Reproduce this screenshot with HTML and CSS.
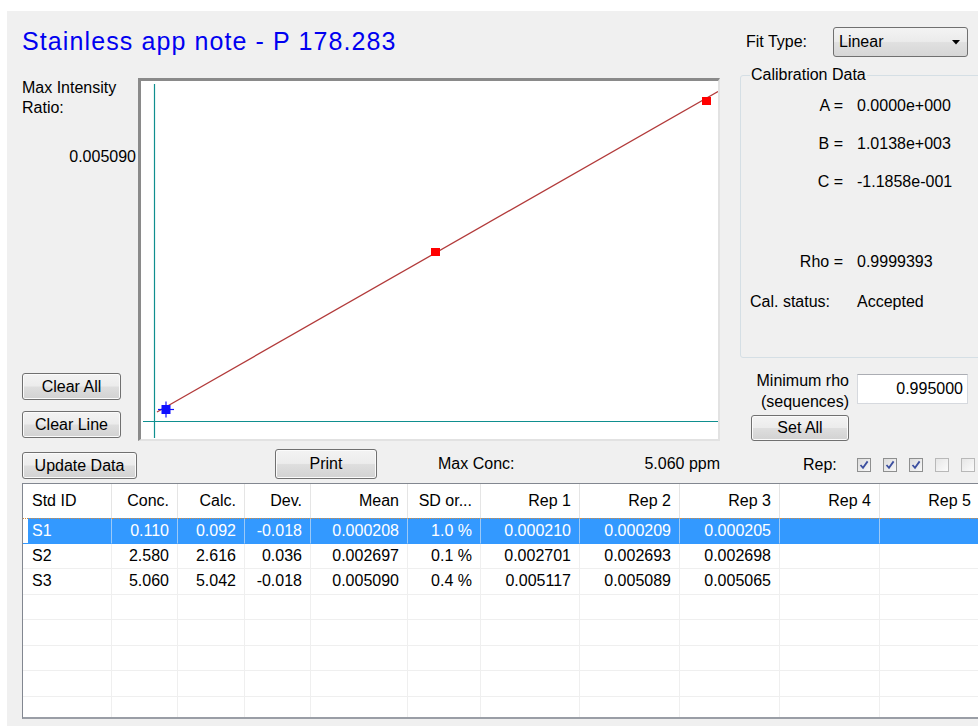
FILE: index.html
```html
<!DOCTYPE html>
<html lang="en">
<head>
<meta charset="utf-8">
<title>Calibration</title>
<link rel="stylesheet" href="styles.css">
</head>
<body>
<div class="window">
  <h1 class="title">Stainless app note - P 178.283</h1>

  <div class="axis-col">
    <div class="ylabel">Max Intensity<br>Ratio:</div>
    <div class="yvalue">0.005090</div>
    <div class="left-buttons">
      <button class="btn btn-clear">Clear All</button>
      <button class="btn btn-clear">Clear Line</button>
    </div>
  </div>

  <div class="chart">
    <svg class="plot" width="577" height="358" viewBox="0 0 577 358">
      <line x1="13.5" y1="3" x2="13.5" y2="357" stroke="#0f8f8f" stroke-width="1.2"/>
      <line x1="2" y1="340.5" x2="577" y2="340.5" stroke="#0f8f8f" stroke-width="1.2"/>
      <line x1="16" y1="331" x2="577" y2="10.5" stroke="#b23a3a" stroke-width="1.3"/>
      <g fill="#1010ff" stroke="#1010ff">
        <rect x="20.5" y="324" width="9" height="9" stroke="none"/>
        <line x1="17" y1="328.5" x2="33" y2="328.5" stroke-width="1.2"/>
        <line x1="25" y1="320.5" x2="25" y2="336.5" stroke-width="1.2"/>
      </g>
      <rect x="290" y="167" width="9" height="8" fill="#ff0000"/>
      <rect x="561" y="16" width="9" height="8" fill="#ff0000"/>
    </svg>
  </div>

  <div class="side">
    <div class="fit">
      <span>Fit Type:</span>
      <div class="combo">
        <span>Linear</span>
        <svg width="8" height="5" viewBox="0 0 8 5"><path d="M0 0 H8 L4 4.5 Z" fill="#000"/></svg>
      </div>
    </div>

    <fieldset class="group">
      <legend>Calibration Data</legend>
      <div class="cal-row first"><span class="k">A =</span><span class="v">0.0000e+000</span></div>
      <div class="cal-row"><span class="k">B =</span><span class="v">1.0138e+003</span></div>
      <div class="cal-row"><span class="k">C =</span><span class="v">-1.1858e-001</span></div>
      <div class="cal-row rho"><span class="k">Rho =</span><span class="v">0.9999393</span></div>
      <div class="cal-row status"><span class="k">Cal. status:</span><span class="v">Accepted</span></div>
    </fieldset>

    <div class="rho-row">
      <div class="rho-label">Minimum rho<br>(sequences)</div>
      <div class="field">0.995000</div>
    </div>
    <button class="btn btn-set">Set All</button>

    <div class="rep-row">
      <span class="rep-label">Rep:</span>
      <span class="check on"><svg width="10" height="10" viewBox="0 0 10 10"><path d="M1.5 5 L4 7.8 L8.6 1.4" fill="none" stroke="#3d50a0" stroke-width="1.8"/></svg></span>
      <span class="check on"><svg width="10" height="10" viewBox="0 0 10 10"><path d="M1.5 5 L4 7.8 L8.6 1.4" fill="none" stroke="#3d50a0" stroke-width="1.8"/></svg></span>
      <span class="check on"><svg width="10" height="10" viewBox="0 0 10 10"><path d="M1.5 5 L4 7.8 L8.6 1.4" fill="none" stroke="#3d50a0" stroke-width="1.8"/></svg></span>
      <span class="check"></span>
      <span class="check"></span>
    </div>
  </div>

  <div class="bar">
    <button class="btn btn-update">Update Data</button>
    <button class="btn btn-print">Print</button>
    <span class="max-label">Max Conc:</span>
    <span class="max-value">5.060 ppm</span>
  </div>

  <div class="grid-wrap">
    <table class="data">
      <colgroup>
        <col style="width:89px"><col style="width:66px"><col style="width:67px"><col style="width:66px">
        <col style="width:97px"><col style="width:73px"><col style="width:99px"><col style="width:100px">
        <col style="width:100px"><col style="width:100px"><col style="width:100px">
      </colgroup>
      <thead>
        <tr>
          <th class="id">Std ID</th><th>Conc.</th><th>Calc.</th><th>Dev.</th><th>Mean</th><th>SD or...</th>
          <th>Rep 1</th><th>Rep 2</th><th>Rep 3</th><th>Rep 4</th><th>Rep 5</th>
        </tr>
      </thead>
      <tbody>
        <tr class="sel">
          <td class="id">S1</td><td>0.110</td><td>0.092</td><td>-0.018</td><td>0.000208</td><td>1.0 %</td>
          <td>0.000210</td><td>0.000209</td><td>0.000205</td><td></td><td></td>
        </tr>
        <tr>
          <td class="id">S2</td><td>2.580</td><td>2.616</td><td>0.036</td><td>0.002697</td><td>0.1 %</td>
          <td>0.002701</td><td>0.002693</td><td>0.002698</td><td></td><td></td>
        </tr>
        <tr>
          <td class="id">S3</td><td>5.060</td><td>5.042</td><td>-0.018</td><td>0.005090</td><td>0.4 %</td>
          <td>0.005117</td><td>0.005089</td><td>0.005065</td><td></td><td></td>
        </tr>
        <tr><td class="id"></td><td></td><td></td><td></td><td></td><td></td><td></td><td></td><td></td><td></td><td></td></tr>
        <tr><td class="id"></td><td></td><td></td><td></td><td></td><td></td><td></td><td></td><td></td><td></td><td></td></tr>
        <tr><td class="id"></td><td></td><td></td><td></td><td></td><td></td><td></td><td></td><td></td><td></td><td></td></tr>
        <tr><td class="id"></td><td></td><td></td><td></td><td></td><td></td><td></td><td></td><td></td><td></td><td></td></tr>
        <tr><td class="id"></td><td></td><td></td><td></td><td></td><td></td><td></td><td></td><td></td><td></td><td></td></tr>
      </tbody>
    </table>
  </div>
</div>
</body>
</html>
```
FILE: styles.css
```css
html, body {
  margin: 0;
  background: #fff;
}

body {
  font-family: "Liberation Sans", Arial, sans-serif;
  font-size: 16px;
  color: #000;
}

/* main form surface */
.window {
  margin: 11px 0 0 7px;
  height: 715px;
  box-sizing: border-box;
  padding: 0 0 7px 15px;
  background: #f0f0f0;
  display: grid;
  grid-template-columns: 116px 582px 19px minmax(0, 1fr);
  grid-template-rows: 67px 367px 38px 1fr;
  overflow: hidden;
}

.title {
  grid-column: 1 / 3;
  grid-row: 1;
  margin: 15px 0 0 0;
  font-size: 25px;
  font-weight: normal;
  line-height: 30px;
  letter-spacing: 1.1px;
  color: #0000f0;
}

/* left column beside the plot */
.axis-col {
  grid-column: 1;
  grid-row: 2;
  display: flex;
  flex-direction: column;
  padding-bottom: 7px;
}

.ylabel {
  line-height: 20px;
}

.yvalue {
  margin-top: 29px;
  padding-right: 2px;
  text-align: right;
  line-height: 20px;
}

.left-buttons {
  margin-top: auto;
  display: flex;
  flex-direction: column;
  gap: 11px;
}

/* push buttons */
.btn {
  box-sizing: border-box;
  height: 27px;
  padding: 0;
  border: 1px solid #707070;
  border-radius: 3px;
  background: linear-gradient(#f3f3f3 0%, #ececec 48%, #dedede 52%, #d2d2d2 100%);
  box-shadow: inset 0 0 0 1px #fbfbfb;
  font: inherit;
  color: #000;
}

.btn-clear { width: 99px; }

/* plot area */
.chart {
  grid-column: 2;
  grid-row: 2;
  align-self: start;
  height: 363px;
  box-sizing: border-box;
  border-style: solid;
  border-width: 3px 2px 2px 3px;
  border-color: #8a8a8a #e2e2e2 #e2e2e2 #8a8a8a;
  background: #fff;
}

.plot {
  display: block;
}

/* right-hand settings column */
.side {
  grid-column: 4;
  grid-row: 1 / 4;
  min-width: 0;
  display: flex;
  flex-direction: column;
  align-items: flex-start;
}

.fit {
  margin-top: 16px;
  height: 30px;
  width: 100%;
  box-sizing: border-box;
  padding-left: 7px;
  display: flex;
  align-items: center;
}

.combo {
  margin-left: auto;
  margin-right: 10px;
  width: 135px;
  height: 30px;
  box-sizing: border-box;
  padding: 0 7px 0 5px;
  border: 1px solid #707070;
  border-radius: 3px;
  background: linear-gradient(#f3f3f3 0%, #ebebeb 48%, #e0e0e0 52%, #d6d6d6 100%);
  display: flex;
  align-items: center;
  justify-content: space-between;
}

.group {
  margin: 9px -12px 0 1px;
  padding: 0;
  width: 260px;
  height: 292px;
  box-sizing: border-box;
  border: 1px solid #d5dfe5;
  border-radius: 3px;
  min-width: 0;
}

.group legend {
  margin-left: 9px;
  padding: 0 1px;
  line-height: 18px;
}

.cal-row {
  display: flex;
  margin-top: 18px;
  line-height: 20px;
}

.cal-row.first { margin-top: 12px; }
.cal-row.rho { margin-top: 60px; }
.cal-row.status { margin-top: 20px; }

.cal-row .k {
  width: 102px;
  text-align: right;
}

.cal-row .v {
  margin-left: 14px;
}

.cal-row.status .k {
  text-align: left;
  padding-left: 9px;
  width: 93px;
}

.rho-row {
  margin-top: 12px;
  display: flex;
  align-items: flex-start;
}

.rho-label {
  width: 110px;
  text-align: right;
  line-height: 21px;
}

.field {
  margin: 4px 0 0 8px;
  width: 111px;
  height: 30px;
  box-sizing: border-box;
  padding-right: 4px;
  border: 1px solid #d6d9de;
  border-top-color: #abadb3;
  background: #fff;
  line-height: 28px;
  text-align: right;
}

.btn-set {
  margin: 3px 0 0 12px;
  width: 98px;
  height: 26px;
}

.rep-row {
  margin-top: 14px;
  height: 20px;
  padding-left: 64px;
  display: flex;
  align-items: center;
  gap: 12px;
}

.rep-label {
  width: 42px;
  line-height: 20px;
}

.check {
  flex: none;
  width: 14px;
  height: 14px;
  box-sizing: border-box;
  border: 1px solid #b8b8b8;
  background: linear-gradient(135deg, #e6e6e6, #fbfbfb);
  display: flex;
  align-items: center;
  justify-content: center;
}

.check.on {
  border-color: #8e8f8f;
  background: linear-gradient(135deg, #dcdcdc, #f8f8f8);
}

/* strip under the plot */
.bar {
  grid-column: 1 / 3;
  grid-row: 3;
  display: flex;
  align-items: flex-start;
}

.btn-update {
  margin-top: 7px;
  width: 115px;
}

.btn-print {
  margin: 4px 0 0 138px;
  width: 102px;
  height: 30px;
}

.max-label {
  margin: 9px 0 0 61px;
  line-height: 20px;
}

.max-value {
  margin: 9px 0 0 auto;
  line-height: 20px;
}

/* results list */
.grid-wrap {
  grid-column: 1 / -1;
  grid-row: 4;
  box-sizing: border-box;
  border-top: 1px solid #828790;
  border-left: 1px solid #828790;
  border-bottom: 2px solid #9a9ea6;
  background: #fff;
  overflow: hidden;
}

.data {
  table-layout: fixed;
  width: 957px;
  border-collapse: separate;
  border-spacing: 0;
}

.data th,
.data td {
  padding: 0 8px 0 0;
  text-align: right;
  white-space: nowrap;
  overflow: hidden;
  font-weight: normal;
}

.data th {
  height: 34px;
  box-sizing: border-box;
  border-right: 1px solid #e5e5e5;
}

.data td {
  height: 25.5px;
  box-sizing: border-box;
  border-right: 1px solid #efefef;
  border-bottom: 1px solid #efefef;
}

.data .id {
  text-align: left;
  padding-left: 9px;
}

.data tr.sel td {
  background: #3399ff;
  color: #fff;
  border-right-color: #9cc9f7;
  border-bottom-color: #3399ff;
  border-top: 1px dotted #d08a40;
}

.data tr.sel td.id {
  background: linear-gradient(to right, #fff 5px, #3399ff 5px);
}
```
